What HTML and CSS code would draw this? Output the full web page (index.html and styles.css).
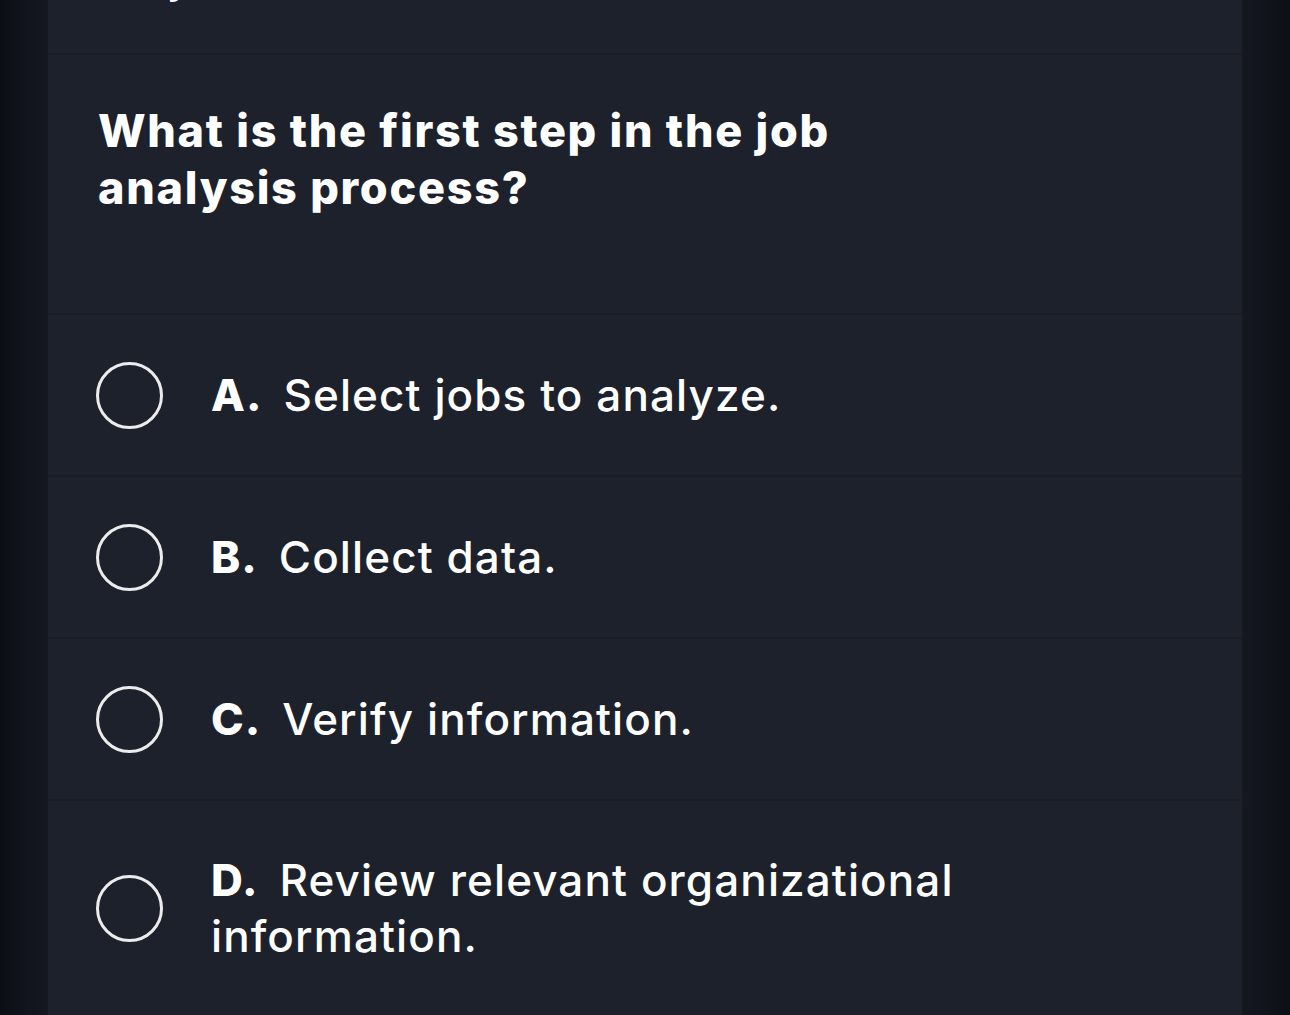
FILE: index.html
```html
<!DOCTYPE html>
<html lang="en">
<head>
    <meta charset="UTF-8">
    <meta name="viewport" content="width=device-width, initial-scale=1.0">
    <title>Quiz</title>
    <link rel="stylesheet" href="styles.css">
</head>
<body>
    <div class="card">
        <div class="top-bar">
            <span class="top-title">Study</span>
        </div>

        <div class="question">
            <h2>What is the first step in the job analysis process?</h2>
        </div>

        <ul class="options">
            <li class="option">
                <span class="radio"></span>
                <p><b>A.</b> Select jobs to analyze.</p>
            </li>
            <li class="option">
                <span class="radio"></span>
                <p><b>B.</b> Collect data.</p>
            </li>
            <li class="option">
                <span class="radio"></span>
                <p><b>C.</b> Verify information.</p>
            </li>
            <li class="option">
                <span class="radio"></span>
                <p><b>D.</b> Review relevant organizational information.</p>
            </li>
        </ul>
    </div>
</body>
</html>
```

FILE: styles.css
```css
* {
    margin: 0;
    padding: 0;
    box-sizing: border-box;
}
body {
    background: linear-gradient(to right, #0c0f15 0px, #151820 48px, #151820 1242px, #0c0f15 1290px);
    color: #fff;
    font-family: 'Inter', 'Liberation Sans', sans-serif;
    height: 1015px;
    overflow: hidden;
}
.card {
    margin: 0 48px;
    background-color: #1d212c;
    height: 100%;
}
.top-bar {
    height: 55px;
    border-bottom: 2px solid #191c25;
    overflow: hidden;
    padding-left: 50px;
}
.top-title {
    display: block;
    font-family: 'Open Sans', sans-serif;
    font-weight: 800;
    font-size: 30px;
    line-height: 40px;
    margin-top: -36px;
}
.question {
    height: 260px;
    padding: 47px 340px 0 50px;
    border-bottom: 2px solid #191c25;
}
.question h2 {
    font-family: 'Inter', sans-serif;
    font-weight: 800;
    font-size: 45px;
    line-height: 57px;
    letter-spacing: 1.7px;
}
.options {
    list-style: none;
}
.option {
    display: flex;
    align-items: center;
    height: 162px;
    padding: 0 200px 0 48px;
    border-bottom: 2px solid #191c25;
}
.option:last-child {
    height: auto;
    border-bottom: none;
    padding-top: 51px;
    padding-bottom: 50px;
}
.radio {
    flex: none;
    width: 67px;
    height: 67px;
    border: 3px solid #ececec;
    border-radius: 50%;
    margin-right: 48px;
}
.option p {
    font-size: 44px;
    font-weight: 500;
    line-height: 56px;
    letter-spacing: 1.1px;
}
.option b {
    font-weight: 800;
    margin-right: 8px;
}
```
